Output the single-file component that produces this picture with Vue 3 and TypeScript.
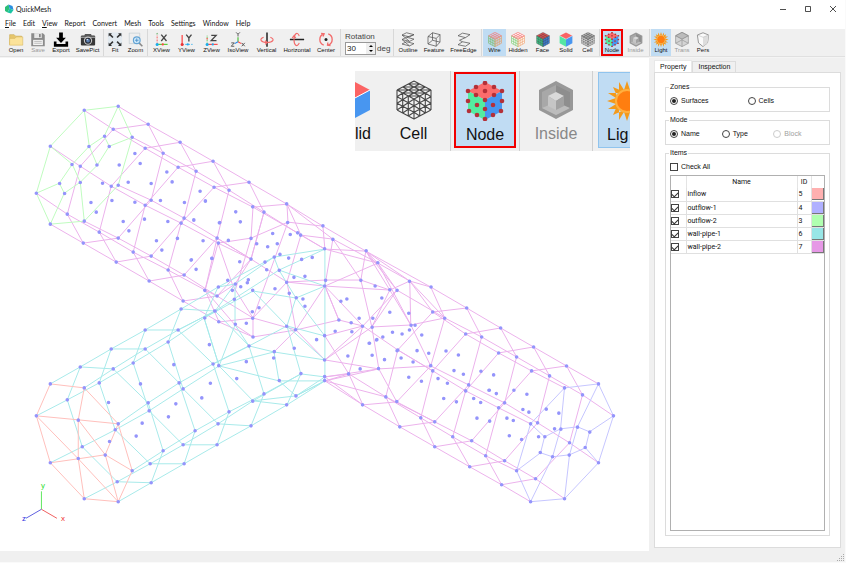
<script setup lang="ts">
import { ref } from 'vue'

type Pt = [number, number]

interface Tool {
  id: string
  label: string
  width: number
  on?: boolean
  disabled?: boolean
  marked?: boolean
}

const menus = ['File', 'Edit', 'View', 'Report', 'Convert', 'Mesh', 'Tools', 'Settings', 'Window', 'Help']
const mnemonic = new Set(['File', 'View'])

const toolsBefore: Tool[][] = [
  [
    { id: 'open', label: 'Open', width: 22 },
    { id: 'save', label: 'Save', width: 22, disabled: true },
    { id: 'export', label: 'Export', width: 24 },
    { id: 'camera', label: 'SavePict', width: 29 },
  ],
  [
    { id: 'fit', label: 'Fit', width: 20 },
    { id: 'zoom', label: 'Zoom', width: 21 },
  ],
  [
    { id: 'xview', label: 'XView', width: 25 },
    { id: 'yview', label: 'YView', width: 25 },
    { id: 'zview', label: 'ZView', width: 25 },
    { id: 'iso', label: 'IsoView', width: 28 },
    { id: 'vertical', label: 'Vertical', width: 29 },
    { id: 'horizontal', label: 'Horizontal', width: 32 },
    { id: 'center', label: 'Center', width: 26 },
  ],
]
const toolsAfter: Tool[][] = [
  [
    { id: 'outline', label: 'Outline', width: 26 },
    { id: 'feature', label: 'Feature', width: 26 },
    { id: 'freeedge', label: 'FreeEdge', width: 33 },
  ],
  [
    { id: 'wire', label: 'Wire', width: 23, on: true },
    { id: 'hidden', label: 'Hidden', width: 24 },
    { id: 'face', label: 'Face', width: 25 },
    { id: 'solid', label: 'Solid', width: 22 },
    { id: 'cell', label: 'Cell', width: 21 },
  ],
  [
    { id: 'node', label: 'Node', width: 22, on: true, marked: true },
    { id: 'inside', label: 'Inside', width: 25, disabled: true },
  ],
  [
    { id: 'light', label: 'Light', width: 20, on: true },
    { id: 'trans', label: 'Trans', width: 22, disabled: true },
    { id: 'pers', label: 'Pers', width: 20 },
  ],
]

const rotation = ref(30)
const zoneKind = ref('Surfaces')
const mode = ref('Name')
const items = ref([
  { name: 'inflow', id: 5, color: '#ffb0b0', checked: true },
  { name: 'outflow-1', id: 4, color: '#b0b0ff', checked: true },
  { name: 'outflow-2', id: 3, color: '#b0ffb0', checked: true },
  { name: 'wall-pipe-1', id: 6, color: '#98e6e6', checked: true },
  { name: 'wall-pipe-2', id: 7, color: '#e698e6', checked: true },
])

/* Cube icons: each face is an origin and two edge vectors in a 40x40 box. */
interface Face { o: Pt; u: Pt; v: Pt }
const top: Face = { o: [20, 1], u: [17, 9], v: [-17, 9] }
const left: Face = { o: [3, 10], u: [17, 9], v: [0, 20] }
const right: Face = { o: [37, 10], u: [-17, 9], v: [0, 20] }
function at(f: Face, a: number, b: number): string {
  return `${(f.o[0] + f.u[0] * a + f.v[0] * b).toFixed(1)} ${(f.o[1] + f.u[1] * a + f.v[1] * b).toFixed(1)}`
}
function grid(f: Face, n: number, diagonals = false): string {
  let d = ''
  for (let i = 0; i <= n; i++) {
    d += `M${at(f, i / n, 0)}L${at(f, i / n, 1)}M${at(f, 0, i / n)}L${at(f, 1, i / n)}`
  }
  if (diagonals) {
    for (let i = 0; i < n; i++) {
      for (let j = 0; j < n; j++) d += `M${at(f, i / n, (j + 1) / n)}L${at(f, (i + 1) / n, j / n)}`
    }
  }
  return d
}
const gTop = grid(top, 3)
const gLeft = grid(left, 3)
const gRight = grid(right, 3)
const cellMesh = grid(top, 3, true) + grid(left, 3, true) + grid(right, 3, true)
const cubeNodes: Pt[] = [
  [20, 2], [11, 6], [29, 6], [3, 10], [20, 10], [37, 10], [11, 14], [29, 14], [20, 19],
  [3, 20], [12, 24], [28, 24], [37, 20], [20, 28], [4, 30], [36, 30], [12, 34], [28, 34], [20, 38],
]

/* Mesh: rings of eight nodes along each pipe, joined lengthwise. */
const ringsLeft: Pt[][] = [
  [[118, 106], [132, 137], [118, 185], [84, 221], [50, 224], [36, 193], [50, 146], [84, 110]],
  [[148, 124], [163, 153], [151, 200], [118, 238], [83, 243], [67, 214], [80, 166], [113, 129]],
  [[180, 142], [196, 171], [184, 218], [151, 256], [116, 262], [99, 232], [111, 186], [145, 148]],
  [[213, 161], [229, 190], [217, 238], [184, 275], [149, 281], [133, 252], [145, 205], [178, 167]],
  [[249, 182], [264, 212], [251, 259], [217, 296], [183, 301], [168, 270], [181, 223], [214, 187]],
]
const ringsRight: Pt[][] = [
  [[467, 308], [482, 337], [469, 385], [435, 422], [400, 427], [386, 397], [398, 350], [433, 312]],
  [[501, 328], [517, 357], [505, 403], [472, 441], [435, 447], [421, 418], [433, 371], [466, 334]],
  [[534, 347], [550, 376], [538, 423], [505, 461], [470, 467], [453, 437], [466, 391], [499, 353]],
  [[567, 366], [583, 395], [570, 443], [536, 479], [502, 485], [486, 456], [499, 408], [532, 371]],
  [[599, 384], [614, 416], [599, 463], [565, 499], [531, 502], [517, 471], [531, 424], [565, 388]],
]
const ringsBranch: Pt[][] = [
  [[50, 384], [84, 388], [118, 424], [132, 471], [118, 502], [84, 499], [50, 463], [36, 416]],
  [[80, 367], [113, 369], [148, 403], [163, 451], [151, 483], [117, 482], [82, 447], [67, 400]],
  [[111, 349], [145, 349], [179, 383], [195, 431], [184, 464], [150, 464], [115, 430], [99, 383]],
  [[145, 330], [178, 330], [213, 364], [229, 412], [217, 445], [183, 445], [149, 411], [133, 363]],
  [[181, 309], [215, 311], [249, 346], [264, 394], [251, 426], [218, 424], [183, 389], [168, 342]],
]
function loop(ring: Pt[]): string {
  return 'M' + ring.map(p => p.join(' ')).join('L') + 'Z'
}
function tube(rings: Pt[][], skip: number): string {
  let d = rings.filter((_, i) => i !== skip).map(loop).join('')
  for (let k = 0; k < 8; k++) d += 'M' + rings.map(r => r[k].join(' ')).join('L')
  return d
}
const tubeLeft = tube(ringsLeft, 0)
const tubeRight = tube(ringsRight, 4)
const tubeBranch = tube(ringsBranch, 0)
const inflowRim = loop(ringsBranch[0])
const outflow1Rim = loop(ringsRight[4])
const outflow2Rim = loop(ringsLeft[0])

const joinMagenta = [
  'M249 182L287 204L323 226L366 251L431 287L467 308', 'M287 204L333 239L378 263L410 281',
  'M253 207L287 204L288 222L323 226L325 249L366 251L378 263', 'M214 187L253 207L251 238L288 222L253 318',
  'M253 207L298 233L325 249L378 263L325 286', 'M264 212L301 235L325 249', 'M287 204L301 235L287 282L296 330',
  'M301 235L333 239L326 280L361 280L390 290L325 286', 'M366 251L361 280L333 239', 'M366 251L390 290L410 281L431 287',
  'M366 251L410 281L411 325L378 263L397 290L445 318', 'M366 251L397 290L363 326', 'M390 290L372 327L361 280',
  'M390 290L411 325', 'M410 281L445 318L411 325L372 327L379 369L397 402', 'M325 286L339 320L363 326L325 360',
  'M325 286L363 326', 'M251 238L218 243L251 259L287 282L325 280', 'M217 238L251 259L264 212', 'M251 238L235 291',
  'M181 223L218 243L205 290L219 322L253 318L253 337L296 330L339 320', 'M217 238L205 290',
  'M218 243L233 286L253 318L296 330L325 360L379 369', 'M253 318L287 282L325 286L296 330L274 352',
  'M168 270L205 290L217 296L253 318', 'M183 301L219 322L253 337', 'M217 296L235 284L251 259', 'M205 290L235 325L253 337',
  'M325 336L363 326L349 374L325 377L379 369L431 366L411 325', 'M325 336L349 374L386 397L435 422',
  'M325 381L363 405L397 402L431 366L445 318', 'M325 381L386 397', 'M325 381L349 374L363 405L400 427',
  'M325 377L363 405', 'M397 402L435 422', 'M363 326L398 350L433 371', 'M325 360L372 327L397 290',
  'M325 381L379 369', 'M433 312L410 281', 'M431 287L445 318L482 337', 'M431 366L469 385',
  'M339 320L325 286L326 280',
].join('')
const joinCyan = [
  'M325 249V381', 'M181 309L218 287L274 257L325 249L279 270L296 298L325 286L279 270L274 257', 'M218 287L235 284L274 257',
  'M215 311L235 284V325L219 366L204 318L218 287', 'M168 342L204 318L253 291L296 298L287 326L253 291',
  'M215 311L279 270', 'M178 330L215 311L204 318', 'M213 364L249 346L287 326L325 336L296 298', 'M183 389L219 366L274 352L325 360L287 326',
  'M219 366L279 381H325L296 396L279 381L274 352L249 346L235 325', 'M219 366L253 401L287 405L325 381L296 396L253 401',
  'M218 424L253 401L301 374L325 377L296 396', 'M264 394L301 374L287 326', 'M251 426L287 405L301 374', 'M204 318L219 366',
].join('')

/* Free nodes, listed per patch: origin in pixels, offsets in thirds of a pixel. */
const patches: { x: number; y: number; pts: Pt[] }[] = [
  { x: 20, y: 90, pts: [[253, 138], [206, 169], [267, 169], [155, 223], [230, 224], [118, 280], [133, 310], [180, 277], [344, 190], [360, 220], [297, 224], [247, 279], [324, 276], [393, 280], [440, 245], [456, 275], [421, 331], [275, 331], [344, 336], [212, 337], [228, 366], [309, 394], [326, 422], [373, 387], [443, 394], [493, 337], [540, 303], [556, 333], [521, 390], [409, 452], [425, 480], [472, 445], [549, 452], [513, 510], [575, 505], [528, 538], [598, 398]] },
  { x: 190, y: 150, pts: [[30, 123], [46, 152], [11, 209], [89, 217], [137, 185], [151, 215], [39, 272], [115, 271], [4, 329], [66, 325], [18, 358], [149, 335], [113, 391], [127, 421], [152, 410], [172, 398], [175, 389], [133, 448], [255, 416], [248, 250], [233, 290], [262, 281], [200, 281], [225, 336], [230, 359], [270, 313], [296, 324], [301, 253], [335, 328], [367, 322], [312, 382], [345, 379], [298, 430], [339, 447], [345, 469], [187, 485], [207, 473], [169, 520], [74, 483], [453, 454], [471, 447], [508, 505], [549, 505], [484, 518], [556, 408], [576, 444], [290, 161], [293, 217], [399, 227], [429, 268], [529, 302], [564, 338], [513, 391], [407, 391], [404, 408], [404, 296], [332, 255], [323, 248], [183, 265], [188, 170], [290, 397], [447, 510], [518, 529], [547, 532], [85, 279], [44, 421], [86, 515], [188, 505], [253, 321], [268, 361], [188, 421], [319, 443], [290, 529], [136, 402], [136, 523], [85, 411], [44, 504], [317, 539]] },
  { x: 20, y: 290, pts: [[265, 338], [361, 282], [461, 224], [568, 164], [571, 280], [545, 324], [467, 342], [445, 381], [366, 400], [348, 439], [268, 455], [174, 391], [174, 506], [255, 496]] },
  { x: 190, y: 290, pts: [[140, 266], [169, 215], [251, 204], [313, 175], [380, 149], [436, 124], [486, 125], [474, 198], [511, 237], [538, 160], [560, 150], [579, 141], [547, 196], [584, 209], [189, 141], [404, 137], [404, 210], [404, 260], [404, 272], [476, 252], [566, 236], [518, 345], [253, 185], [268, 272], [333, 251], [318, 318], [290, 345], [188, 334], [86, 227]] },
  { x: 320, y: 230, pts: [[166, 168], [186, 204], [210, 247], [267, 250], [159, 265], [118, 265], [94, 278], [218, 307], [247, 312], [269, 300], [286, 286], [306, 315], [149, 340], [171, 329], [189, 321], [157, 376], [194, 389], [244, 384], [280, 396], [292, 362], [327, 370], [232, 362], [379, 363], [416, 375], [403, 422], [431, 433], [267, 442], [305, 454], [355, 446], [383, 460], [372, 506], [410, 516], [462, 506], [483, 518], [484, 424], [472, 565], [508, 481], [210, 179], [232, 181], [269, 154], [334, 171], [375, 265], [274, 286], [333, 407], [231, 515]] },
  { x: 460, y: 300, pts: [[64, 214], [102, 225], [11, 223], [89, 271], [110, 281], [163, 271], [202, 283], [42, 296], [63, 308], [190, 329], [208, 337], [260, 328], [298, 340], [52, 355], [90, 364], [142, 355], [161, 362], [149, 408], [186, 419], [237, 411], [285, 387], [256, 411], [304, 388], [354, 382], [391, 397], [377, 443], [329, 466], [279, 471], [242, 458]] },
]
const nodes: Pt[] = [
  ...ringsLeft.flat(),
  ...ringsRight.flat(),
  ...ringsBranch.flat(),
  ...patches.flatMap(t => t.pts.map(([x, y]): Pt => [t.x + x / 3, t.y + y / 3])),
]
const nodePath = nodes.map(([x, y]) => `M${x.toFixed(1)} ${y.toFixed(1)}h0`).join('')
</script>

<template>
  <div class="window">
    <svg class="defs" aria-hidden="true">
      <symbol id="ic-open" viewBox="0 0 40 40">
        <path d="M3 34V7h12l4 4h16v5" fill="#e6c66c" stroke="#c9a84e" stroke-width="1.5" />
        <path d="M3 35V17h14l4-4h17v22z" fill="#fbe39a" stroke="#d6b65c" stroke-width="1.5" />
      </symbol>
      <symbol id="ic-save" viewBox="0 0 40 40">
        <path d="M2 3h31l5 5v30H2z" fill="#8b8b8b" />
        <path d="M10 3h20v13H10z" fill="#e6e6e6" /><path d="M23 5h4v9h-4z" fill="#777" />
        <path d="M7 21h26v14H7z" fill="#f4f4f4" /><path d="M10 25h20M10 30h20" stroke="#aaa" stroke-width="2" />
      </symbol>
      <symbol id="ic-export" viewBox="0 0 40 40">
        <path d="M15 1h10v14h8L20 29 7 15h8zM1 25h7v7h24v-7h7v14H1z" fill="#000" />
      </symbol>
      <symbol id="ic-camera" viewBox="0 0 40 40">
        <path d="M12 5h16l2 5H10z" fill="#555" />
        <rect x="1" y="9" width="38" height="27" rx="3" fill="#383838" />
        <path d="M1 14h38" stroke="#aaa" stroke-width="3" />
        <circle cx="20" cy="23" r="11" fill="#c8c8c8" /><circle cx="20" cy="23" r="8" fill="#20242c" />
        <circle cx="20" cy="23" r="5" fill="#5d7fb0" /><circle cx="18" cy="20" r="2" fill="#e4efff" />
      </symbol>
      <symbol id="ic-fit" viewBox="0 0 40 40">
        <path d="M1 1h38v38H1z" fill="#e2eaf0" />
        <path d="M3 3h9l-3 3 7 7-3 3-7-7-3 3zM37 3v9l-3-3-7 7-3-3 7-7-3-3zM3 37v-9l3 3 7-7 3 3-7 7 3 3zM37 37h-9l3-3-7-7 3-3 7 7 3-3z" fill="#333" />
      </symbol>
      <symbol id="ic-zoom" viewBox="0 0 40 40">
        <path d="M2 3h28v28H2z" fill="#eee" stroke="#b8c4cc" stroke-width="1.5" />
        <path d="M28 29l9 9" stroke="#888" stroke-width="4" />
        <circle cx="22" cy="22" r="9" fill="#cfe9fa" stroke="#64a4d4" stroke-width="3" /><path d="M17 22h10M22 17v10" stroke="#3d88c4" stroke-width="2" />
      </symbol>
      <symbol id="ic-xview" viewBox="0 0 40 40">
        <path d="M7 33V8" stroke="#f33" stroke-width="2" stroke-dasharray="5 3" /><path d="M7 33h28" stroke="#5c3" stroke-width="3" />
        <circle cx="7" cy="33" r="4" fill="#18aef0" /><circle cx="22" cy="33" r="3" fill="#f44" /><path d="M4 6l3-4 3 4z" fill="#6a6" />
        <path d="M18 7l14 17M32 7L18 24" stroke="#444" stroke-width="3.5" />
      </symbol>
      <symbol id="ic-yview" viewBox="0 0 40 40">
        <path d="M7 33V8" stroke="#f33" stroke-width="3" /><path d="M7 33h28" stroke="#2ae" stroke-width="2" stroke-dasharray="5 3" />
        <circle cx="7" cy="33" r="4" fill="#e33" /><circle cx="22" cy="33" r="3" fill="#2ae" />
        <path d="M18 7l7 9 7-9M25 16v9" fill="none" stroke="#444" stroke-width="3.5" />
      </symbol>
      <symbol id="ic-zview" viewBox="0 0 40 40">
        <path d="M7 33V8" stroke="#4b3" stroke-width="2" stroke-dasharray="5 3" /><path d="M7 33h28" stroke="#f44" stroke-width="3" />
        <circle cx="7" cy="33" r="4" fill="#18aef0" /><circle cx="22" cy="33" r="3" fill="#2ae" /><circle cx="7" cy="18" r="2" fill="#f44" />
        <path d="M18 9h13L18 23h14" fill="none" stroke="#444" stroke-width="3.5" />
      </symbol>
      <symbol id="ic-iso" viewBox="0 0 40 40">
        <path d="M20 26V14" stroke="#4b3" stroke-width="3" /><path d="M20 26l9 5" stroke="#f44" stroke-width="3" /><path d="M20 26l-9 5" stroke="#28e" stroke-width="3" />
        <path d="M15 1l5 5 5-5M20 6v6M30 29l8 9M38 29l-8 9M2 29h8L2 38h8" fill="none" stroke="#555" stroke-width="2.5" />
      </symbol>
      <symbol id="ic-vertical" viewBox="0 0 40 40">
        <path d="M20 1v38" stroke="#222" stroke-width="4" />
        <path d="M11 14C-3 19 5 28 20 28s23-8 9-14M15 23l6 5-6 5" fill="none" stroke="#f26a6a" stroke-width="3" />
      </symbol>
      <symbol id="ic-horizontal" viewBox="0 0 40 40">
        <path d="M1 20h38" stroke="#222" stroke-width="4" />
        <path d="M26 11C21-3 12 5 12 20s8 23 14 9M7 16l5-6 5 6" fill="none" stroke="#f26a6a" stroke-width="3" />
      </symbol>
      <symbol id="ic-center" viewBox="0 0 40 40">
        <circle cx="20" cy="20" r="4" fill="#222" />
        <path d="M14 5a16 16 0 0 0 0 30M26 5a16 16 0 0 1 0 30M7 4l8 1-3 7M25 28l-1 7 8 1" fill="none" stroke="#f26a6a" stroke-width="3.5" />
      </symbol>
      <symbol id="ic-outline" viewBox="0 0 40 40">
        <path d="M4 8l12-6 20 5-12 6zM4 20l12-6 20 5-12 6zM4 32l12-6 20 5-12 6zM4 8l20 17M36 7L16 14M4 20l20 17" fill="none" stroke="#555" stroke-width="2" />
      </symbol>
      <symbol id="ic-feature" viewBox="0 0 40 40">
        <path d="M4 12L16 2l20 5-10 10zM4 12v20l22 6V17M26 38l10-11V7M16 2v20L4 32M16 22l20 5" fill="none" stroke="#555" stroke-width="2" />
      </symbol>
      <symbol id="ic-freeedge" viewBox="0 0 40 40">
        <path d="M4 10L16 3l20 4-12 8zM4 34l12-8 20 4-12 8zM24 15L8 22l8 4" fill="none" stroke="#555" stroke-width="2" />
      </symbol>
      <symbol id="ic-wire" viewBox="0 0 40 40">
        <g fill="none" stroke-width="2"><path :d="gLeft" stroke="#7fbc78" /><path :d="gRight" stroke="#e0a070" /><path :d="gTop" stroke="#f08484" /></g>
      </symbol>
      <symbol id="ic-hidden" viewBox="0 0 40 40">
        <path d="M20 1l17 9v20l-17 9-17-9V10z" fill="#fff" />
        <g fill="none" stroke-width="2"><path :d="gLeft" stroke="#80cc78" /><path :d="gRight" stroke="#f0a878" /><path :d="gTop" stroke="#f88080" /></g>
      </symbol>
      <symbol id="ic-solid" viewBox="0 0 40 40">
        <path d="M20 1l17 9-17 9-17-9z" fill="#fb6464" /><path d="M3 10l17 9v20L3 30z" fill="#54e6a4" /><path d="M37 10l-17 9v20l17-9z" fill="#4896f0" />
        <path d="M3 10l17 9 17-9" fill="none" stroke="#fff" />
      </symbol>
      <symbol id="ic-face" viewBox="0 0 40 40">
        <path d="M20 1l17 9-17 9-17-9z" fill="#e85050" /><path d="M3 10l17 9v20L3 30z" fill="#3cc488" /><path d="M37 10l-17 9v20l17-9z" fill="#3a80dc" />
        <path :d="gTop + gLeft + gRight" fill="none" stroke="#444" stroke-width="1" />
      </symbol>
      <symbol id="ic-cell" viewBox="0 0 40 40">
        <path d="M20 1l17 9v20l-17 9-17-9V10z" fill="#f2f2f2" /><path :d="cellMesh" fill="none" stroke="#484848" stroke-width="1.1" />
      </symbol>
      <symbol id="ic-node" viewBox="0 0 40 40">
        <path d="M20 1l17 9-17 9-17-9z" fill="#fb6c6c" /><path d="M3 10l17 9v20L3 30z" fill="#54eca0" /><path d="M37 10l-17 9v20l17-9z" fill="#4896f0" />
        <circle v-for="(n, i) in cubeNodes" :key="i" :cx="n[0]" :cy="n[1]" r="2.3" fill="#b43038" />
      </symbol>
      <symbol id="ic-inside" viewBox="0 0 40 40">
        <path d="M20 1l17 9v20l-17 9-17-9V10z" fill="#989898" />
        <path d="M20 5l14 7v16l-14 7-14-7V12z" fill="#a8a8a8" /><path d="M20 5v17l14 7V12z" fill="#8e8e8e" /><path d="M6 28l14-6 14 6-14 7z" fill="#bcbcbc" />
        <path d="M20 12l8 4-8 5-8-5z" fill="#dadada" /><path d="M12 16l8 5v9l-8-4z" fill="#c6c6c6" /><path d="M28 16l-8 5v9l8-4z" fill="#a2a2a2" />
      </symbol>
      <symbol id="ic-light" viewBox="0 0 40 40">
        <path d="M20 0l3 9h-6zM20 40l3-9h-6zM0 20l9 3v-6zM40 20l-9 3v-6zM6 6l9 4-5 5zM34 6l-4 9-5-5zM6 34l4-9 5 5zM34 34l-9-4 5-5zM12 1l5 8-5 2zM28 1l-5 8 5 2zM12 39l5-8-5-2zM28 39l-5-8 5-2zM1 12l8 5 2-5zM1 28l8-5 2 5zM39 12l-8 5-2-5zM39 28l-8-5-2 5z" fill="#f39a1c" />
        <circle cx="20" cy="20" r="11" fill="#ff7e10" stroke="#ffb040" stroke-width="2" />
      </symbol>
      <symbol id="ic-trans" viewBox="0 0 40 40">
        <path d="M20 1l17 9v20l-17 9-17-9V10z" fill="#d4d4d4" stroke="#999" stroke-width="2" />
        <path d="M3 10l17-9 17 9-17 9z" fill="#bcbcbc" stroke="#888" stroke-width="2" /><path d="M20 19v20M3 30l17-9 17 9" stroke="#999" stroke-width="2" fill="none" />
      </symbol>
      <symbol id="ic-pers" viewBox="0 0 40 40">
        <path d="M20 2l15 6-3 21-12 10L8 29 5 8z" fill="#fafafa" stroke="#777" stroke-width="2" />
        <path d="M20 39V14l15-6-3 21z" fill="#ddd" /><path d="M5 8l15 6 15-6" fill="none" stroke="#bbb" stroke-width="1.5" />
      </symbol>
    </svg>

    <header class="titlebar">
      <svg class="logo" viewBox="0 0 20 20" aria-hidden="true">
        <path d="M9 1L2 6v8l5 3 4-8z" fill="#2abf78" /><path d="M9 1l8 3 2 8-8-3z" fill="#2b8ee0" /><path d="M7 17l4-8 8 3-5 7z" fill="#1cc4a4" />
      </svg>
      <span class="title">QuickMesh</span>
      <div class="controls">
        <button type="button" aria-label="Minimize"><svg viewBox="0 0 8 8"><path d="M1 4.5h6" /></svg></button>
        <button type="button" aria-label="Maximize"><svg viewBox="0 0 8 8"><path d="M1.5 1.5h5v5h-5z" /></svg></button>
        <button type="button" aria-label="Close"><svg viewBox="0 0 8 8"><path d="M1 1l6 6M7 1L1 7" /></svg></button>
      </div>
    </header>

    <nav class="menubar">
      <button v-for="m in menus" :key="m" type="button"><u v-if="mnemonic.has(m)">{{ m[0] }}</u><template v-else>{{ m[0] }}</template>{{ m.slice(1) }}</button>
    </nav>

    <div class="toolbar">
      <div v-for="(group, g) in toolsBefore" :key="'b' + g" class="group">
        <button v-for="t in group" :key="t.id" type="button" class="tool" :class="{ on: t.on }" :disabled="t.disabled" :style="{ width: t.width + 'px' }">
          <svg><use :href="'#ic-' + t.id" /></svg>
          <span>{{ t.label }}</span>
        </button>
      </div>
      <div class="group rotation">
        <label for="rotation">Rotation</label>
        <div class="spinrow">
          <div class="spin">
            <input id="rotation" v-model="rotation" type="text">
            <div class="arrows">
              <button type="button" aria-label="Increase" @click="rotation++"><svg viewBox="0 0 6 4"><path d="M3 1l2 2H1z" /></svg></button>
              <button type="button" aria-label="Decrease" @click="rotation--"><svg viewBox="0 0 6 4"><path d="M3 3L1 1h4z" /></svg></button>
            </div>
          </div>
          <span>deg</span>
        </div>
      </div>
      <div v-for="(group, g) in toolsAfter" :key="'a' + g" class="group">
        <button v-for="t in group" :key="t.id" type="button" class="tool" :class="{ on: t.on, marked: t.marked }" :disabled="t.disabled" :style="{ width: t.width + 'px' }">
          <svg><use :href="'#ic-' + t.id" /></svg>
          <span>{{ t.label }}</span>
        </button>
      </div>
    </div>

    <main class="work">
      <section class="viewport">
        <svg class="mesh" viewBox="0 58 650 493" preserveAspectRatio="xMinYMin meet">
          <g transform="translate(0.4 0.4)">
            <g fill="none" stroke-width="1">
              <path :d="tubeLeft + tubeRight + joinMagenta" stroke="#ecb2ec" />
              <path :d="tubeBranch + joinCyan" stroke="#a8eaea" />
              <path :d="outflow2Rim" stroke="#c0fcc0" />
              <path d="M84 110L89 146L97 165L80 182L64 193L59 183L36 193M118 106L104 136L89 146L72 164L59 183M104 136L109 146L132 137M109 146L97 165M50 146L72 164L80 182L84 221M50 224L64 193" stroke="#c0fcc0" />
              <path :d="inflowRim" stroke="#ffc0bc" />
              <path d="M36 416L78 420L118 424L105 455L132 471M84 388L78 420V459L36 416M50 463L78 459L105 455L78 420M105 455L118 502L78 459L84 499" stroke="#ffc0bc" />
              <path :d="outflow1Rim" stroke="#c6c6ff" />
              <path d="M565 388L561 429L553 457L531 502M599 384L578 427L570 455L565 499M614 416L590 432L578 427L561 429L545 437L541 453L553 457L570 455L586 448L590 432M586 448L599 463M531 424L545 437M541 453L517 471" stroke="#c6c6ff" />
            </g>
            <path :d="nodePath" fill="none" stroke="#9494fb" stroke-width="3.6" stroke-linecap="round" />
          </g>
          <g fill="none" stroke-width="1">
            <path d="M41.5 510V492" stroke="#60e860" /><path d="M41.5 510L57 519" stroke="#f06060" /><path d="M41.5 510L26 519" stroke="#6060e0" />
          </g>
          <g class="axis"><text x="41" y="489" fill="#30e030">y</text><text x="61" y="522" fill="#f03030">x</text><text x="22" y="522" fill="#3030e0">z</text></g>
        </svg>

        <div class="magnified">
          <div class="big solid"><svg><use href="#ic-solid" /></svg><span>lid</span></div>
          <div class="big cell"><svg><use href="#ic-cell" /></svg><span>Cell</span></div>
          <div class="big framed"><svg><use href="#ic-node" /></svg><span>Node</span></div>
          <div class="big inside"><svg><use href="#ic-inside" /></svg><span>Inside</span></div>
          <div class="big lit"><svg><use href="#ic-light" /></svg><span>Lig</span></div>
        </div>
      </section>

      <aside class="panel">
        <div class="tabs" role="tablist">
          <button type="button" role="tab" class="active" aria-selected="true">Property</button>
          <button type="button" role="tab" aria-selected="false">Inspection</button>
        </div>
        <div class="pane">
          <fieldset>
            <legend>Zones</legend>
            <div class="radios two">
              <label><input v-model="zoneKind" type="radio" name="zones" value="Surfaces">Surfaces</label>
              <label><input v-model="zoneKind" type="radio" name="zones" value="Cells">Cells</label>
            </div>
          </fieldset>
          <fieldset>
            <legend>Mode</legend>
            <div class="radios three">
              <label><input v-model="mode" type="radio" name="mode" value="Name">Name</label>
              <label><input v-model="mode" type="radio" name="mode" value="Type">Type</label>
              <label class="off"><input v-model="mode" type="radio" name="mode" value="Block" disabled>Block</label>
            </div>
          </fieldset>
          <fieldset class="items">
            <legend>Items</legend>
            <label class="all"><input type="checkbox">Check All</label>
            <div class="list">
              <table>
                <thead>
                  <tr><th class="c-check"></th><th>Name</th><th class="c-id">ID</th><th class="c-color"></th></tr>
                </thead>
                <tbody>
                  <tr v-for="it in items" :key="it.id">
                    <td><input v-model="it.checked" type="checkbox" :aria-label="it.name"></td>
                    <td class="name">{{ it.name }}</td>
                    <td class="id">{{ it.id }}</td>
                    <td><button type="button" class="swatch" :aria-label="it.name + ' color'" :style="{ backgroundColor: it.color }"></button></td>
                  </tr>
                </tbody>
              </table>
            </div>
          </fieldset>
        </div>
      </aside>
    </main>

    <footer class="status">
      <svg viewBox="0 0 8 8" aria-hidden="true"><path d="M6 0h1v1H6zM4 2h1v1H4zM6 2h1v1H6zM2 4h1v1H2zM4 4h1v1H4zM6 4h1v1H6zM0 6h1v1H0zM2 6h1v1H2zM4 6h1v1H4zM6 6h1v1H6z" fill="#aaa" /></svg>
    </footer>
  </div>
</template>

<style>
body {
  background: #fff;
}
</style>

<style scoped>
.window {
  display: flex;
  flex-direction: column;
  height: 100vh;
  box-sizing: border-box;
  border-right: 1px solid #fafafa;
  border-bottom: 1px solid #fafafa;
  font: 7px/8px "Liberation Sans", Arial, sans-serif;
  color: #111;
  overflow: hidden;
}
.window * {
  box-sizing: border-box;
}
.defs {
  position: absolute;
  width: 0;
  height: 0;
}
button {
  margin: 0;
  padding: 0;
  border: 0;
  background: none;
  font: inherit;
  color: inherit;
}
.titlebar {
  display: flex;
  align-items: center;
  height: 17px;
  padding-left: 4px;
  gap: 2px;
}
.logo {
  width: 10px;
  height: 10px;
}
.title {
  font: 7px/10px Lato, sans-serif;
}
.controls {
  display: flex;
  margin-left: auto;
}
.controls button {
  display: flex;
  justify-content: center;
  width: 25px;
}
.controls svg {
  width: 8px;
  height: 8px;
  fill: none;
  stroke: #222;
  stroke-width: 0.8;
}
.menubar {
  display: flex;
  align-items: center;
  gap: 7px;
  height: 12px;
  padding-left: 5px;
  font: 7px/10px Lato, sans-serif;
}
.toolbar {
  display: flex;
  height: 28px;
  padding-left: 5px;
  background: #f0f0f0;
  border-bottom: 1px solid #e0e0e0;
}
.group {
  display: flex;
  padding-right: 1px;
}
.group + .group {
  padding-left: 1px;
  border-left: 1px solid #d8d8d8;
}
.tool {
  display: flex;
  flex-direction: column;
  align-items: center;
  padding-top: 3px;
  font-size: 6px;
  line-height: 7px;
  white-space: nowrap;
}
.tool svg {
  width: 16px;
  height: 15px;
}
.tool:disabled {
  color: #999;
}
.tool.on {
  background: #c0dcf3;
}
.tool.marked {
  padding-top: 1px;
  border: 2px solid #f00000;
}
.rotation {
  flex-direction: column;
  width: 53px;
  padding-top: 3px;
  font-size: 8px;
  line-height: 10px;
  color: #444;
}
.group.rotation {
  padding-left: 4px;
}
.spinrow {
  display: flex;
  align-items: center;
  gap: 1px;
}
.spin {
  display: flex;
  width: 31px;
  height: 13px;
  border: 1px solid #999;
  background: #fff;
}
.spin input {
  width: 20px;
  padding: 0 1px;
  border: 0;
  font: inherit;
  color: #222;
  outline: 0;
}
.arrows {
  display: flex;
  flex-direction: column;
  width: 9px;
  background: #eee;
}
.arrows button {
  display: flex;
  flex: 1;
  align-items: center;
  justify-content: center;
}
.arrows svg {
  width: 6px;
  height: 4px;
}
.work {
  display: flex;
  flex: 1;
  min-height: 0;
  border-top: 1px solid #f4f4f4;
}
.viewport {
  position: relative;
  flex: 1;
  min-width: 0;
  background: #fff;
}
.mesh {
  display: block;
  width: 100%;
  height: 100%;
}
.axis {
  font: 8px "Liberation Sans", Arial, sans-serif;
}
.magnified {
  position: absolute;
  top: 13px;
  left: 355px;
  display: flex;
  width: 275px;
  height: 80px;
  background: #f0f0f0;
  overflow: hidden;
}
.big {
  display: flex;
  flex: none;
  flex-direction: column;
  align-items: center;
  gap: 5px;
  padding-top: 9px;
  font-size: 16px;
  line-height: 18px;
}
.big svg {
  flex: none;
  width: 40px;
  height: 40px;
}
.big.solid {
  width: 18px;
  align-items: flex-end;
}
.big.solid span {
  padding-right: 2px;
}
.cell {
  width: 78px;
  padding-left: 4px;
  border-right: 1px solid #d0d0d0;
}
.framed {
  width: 62px;
  height: 76px;
  margin: 1px 3px 0;
  padding-top: 7px;
  border: 2px solid #f00000;
  background: #c0dcf3;
}
.inside {
  width: 74px;
  border-left: 1px solid #d0d0d0;
  border-right: 1px solid #d0d0d0;
  color: #888;
}
.lit {
  width: 58px;
  height: 76px;
  margin: 1px 0 0 5px;
  padding: 8px 0 0 8px;
  align-items: flex-start;
  border: 1px solid #90c4ee;
  background: #c0dcf3;
}
.panel {
  display: flex;
  flex-direction: column;
  width: 196px;
  padding: 2px 4px 3px 5px;
  background: #f0f0f0;
}
.tabs {
  display: flex;
  align-items: flex-end;
}
.tabs button {
  height: 11px;
  padding: 0 5px;
  border: 1px solid #dcdcdc;
  border-bottom: 0;
}
.tabs .active {
  height: 12px;
  background: #fff;
  border-color: #e8e8e8;
}
.pane {
  display: flex;
  flex: 1;
  flex-direction: column;
  gap: 4px;
  min-height: 0;
  padding: 10px 10px 11px;
  border: 1px solid #dcdcdc;
  background: #fff;
}
fieldset {
  min-width: 0;
  margin: 0;
  padding: 4px;
  border: 1px solid #dcdcdc;
}
legend {
  padding: 0 1px;
  margin-left: -1px;
}
label {
  display: flex;
  align-items: center;
  gap: 3px;
}
.off {
  color: #a0a0a0;
}
.radios {
  display: grid;
  height: 12px;
  align-items: center;
}
.two {
  grid-template-columns: 1fr 1fr;
}
.three {
  grid-template-columns: 1fr 1fr 1fr;
}
input[type="radio"],
input[type="checkbox"] {
  appearance: none;
  display: grid;
  place-content: center;
  width: 8px;
  height: 8px;
  margin: 0;
  border: 1px solid #444;
  background: #fff;
}
input[type="radio"] {
  border-radius: 50%;
}
input[type="radio"]:checked::after {
  content: "";
  width: 4px;
  height: 4px;
  border-radius: 50%;
  background: #222;
}
input[type="radio"]:disabled {
  border-color: #ccc;
}
input[type="checkbox"]:checked::after {
  content: "";
  width: 5px;
  height: 3px;
  border: solid #333;
  border-width: 0 0 1px 1px;
  transform: rotate(-45deg);
}
.items {
  display: flex;
  flex: 1;
  flex-direction: column;
  padding-top: 6px;
}
.list {
  flex: 1;
  margin-top: 4px;
  border: 1px solid #b0b0b0;
}
table {
  width: 100%;
  border-collapse: collapse;
  table-layout: fixed;
  font: 7px/8px Roboto, sans-serif;
}
th {
  height: 12px;
  padding: 0;
  font-weight: 400;
  border-right: 1px solid #e4e4e4;
}
.c-check {
  width: 15px;
}
.c-id {
  width: 14px;
}
.c-color {
  width: 13px;
}
th:last-child,
td:last-child {
  border-right: 0;
}
td {
  height: 13px;
  padding: 0;
  border-right: 1px solid #e0e0e0;
  border-bottom: 1px solid #e0e0e0;
}
.name,
.id {
  padding-left: 1px;
}
.swatch {
  display: block;
  width: 100%;
  height: 12px;
  border-right: 1px solid #777;
  border-bottom: 1px solid #777;
}
.status {
  display: flex;
  align-items: flex-end;
  justify-content: flex-end;
  height: 11px;
  background: #f0f0f0;
}
.status svg {
  width: 8px;
  height: 8px;
}
</style>
